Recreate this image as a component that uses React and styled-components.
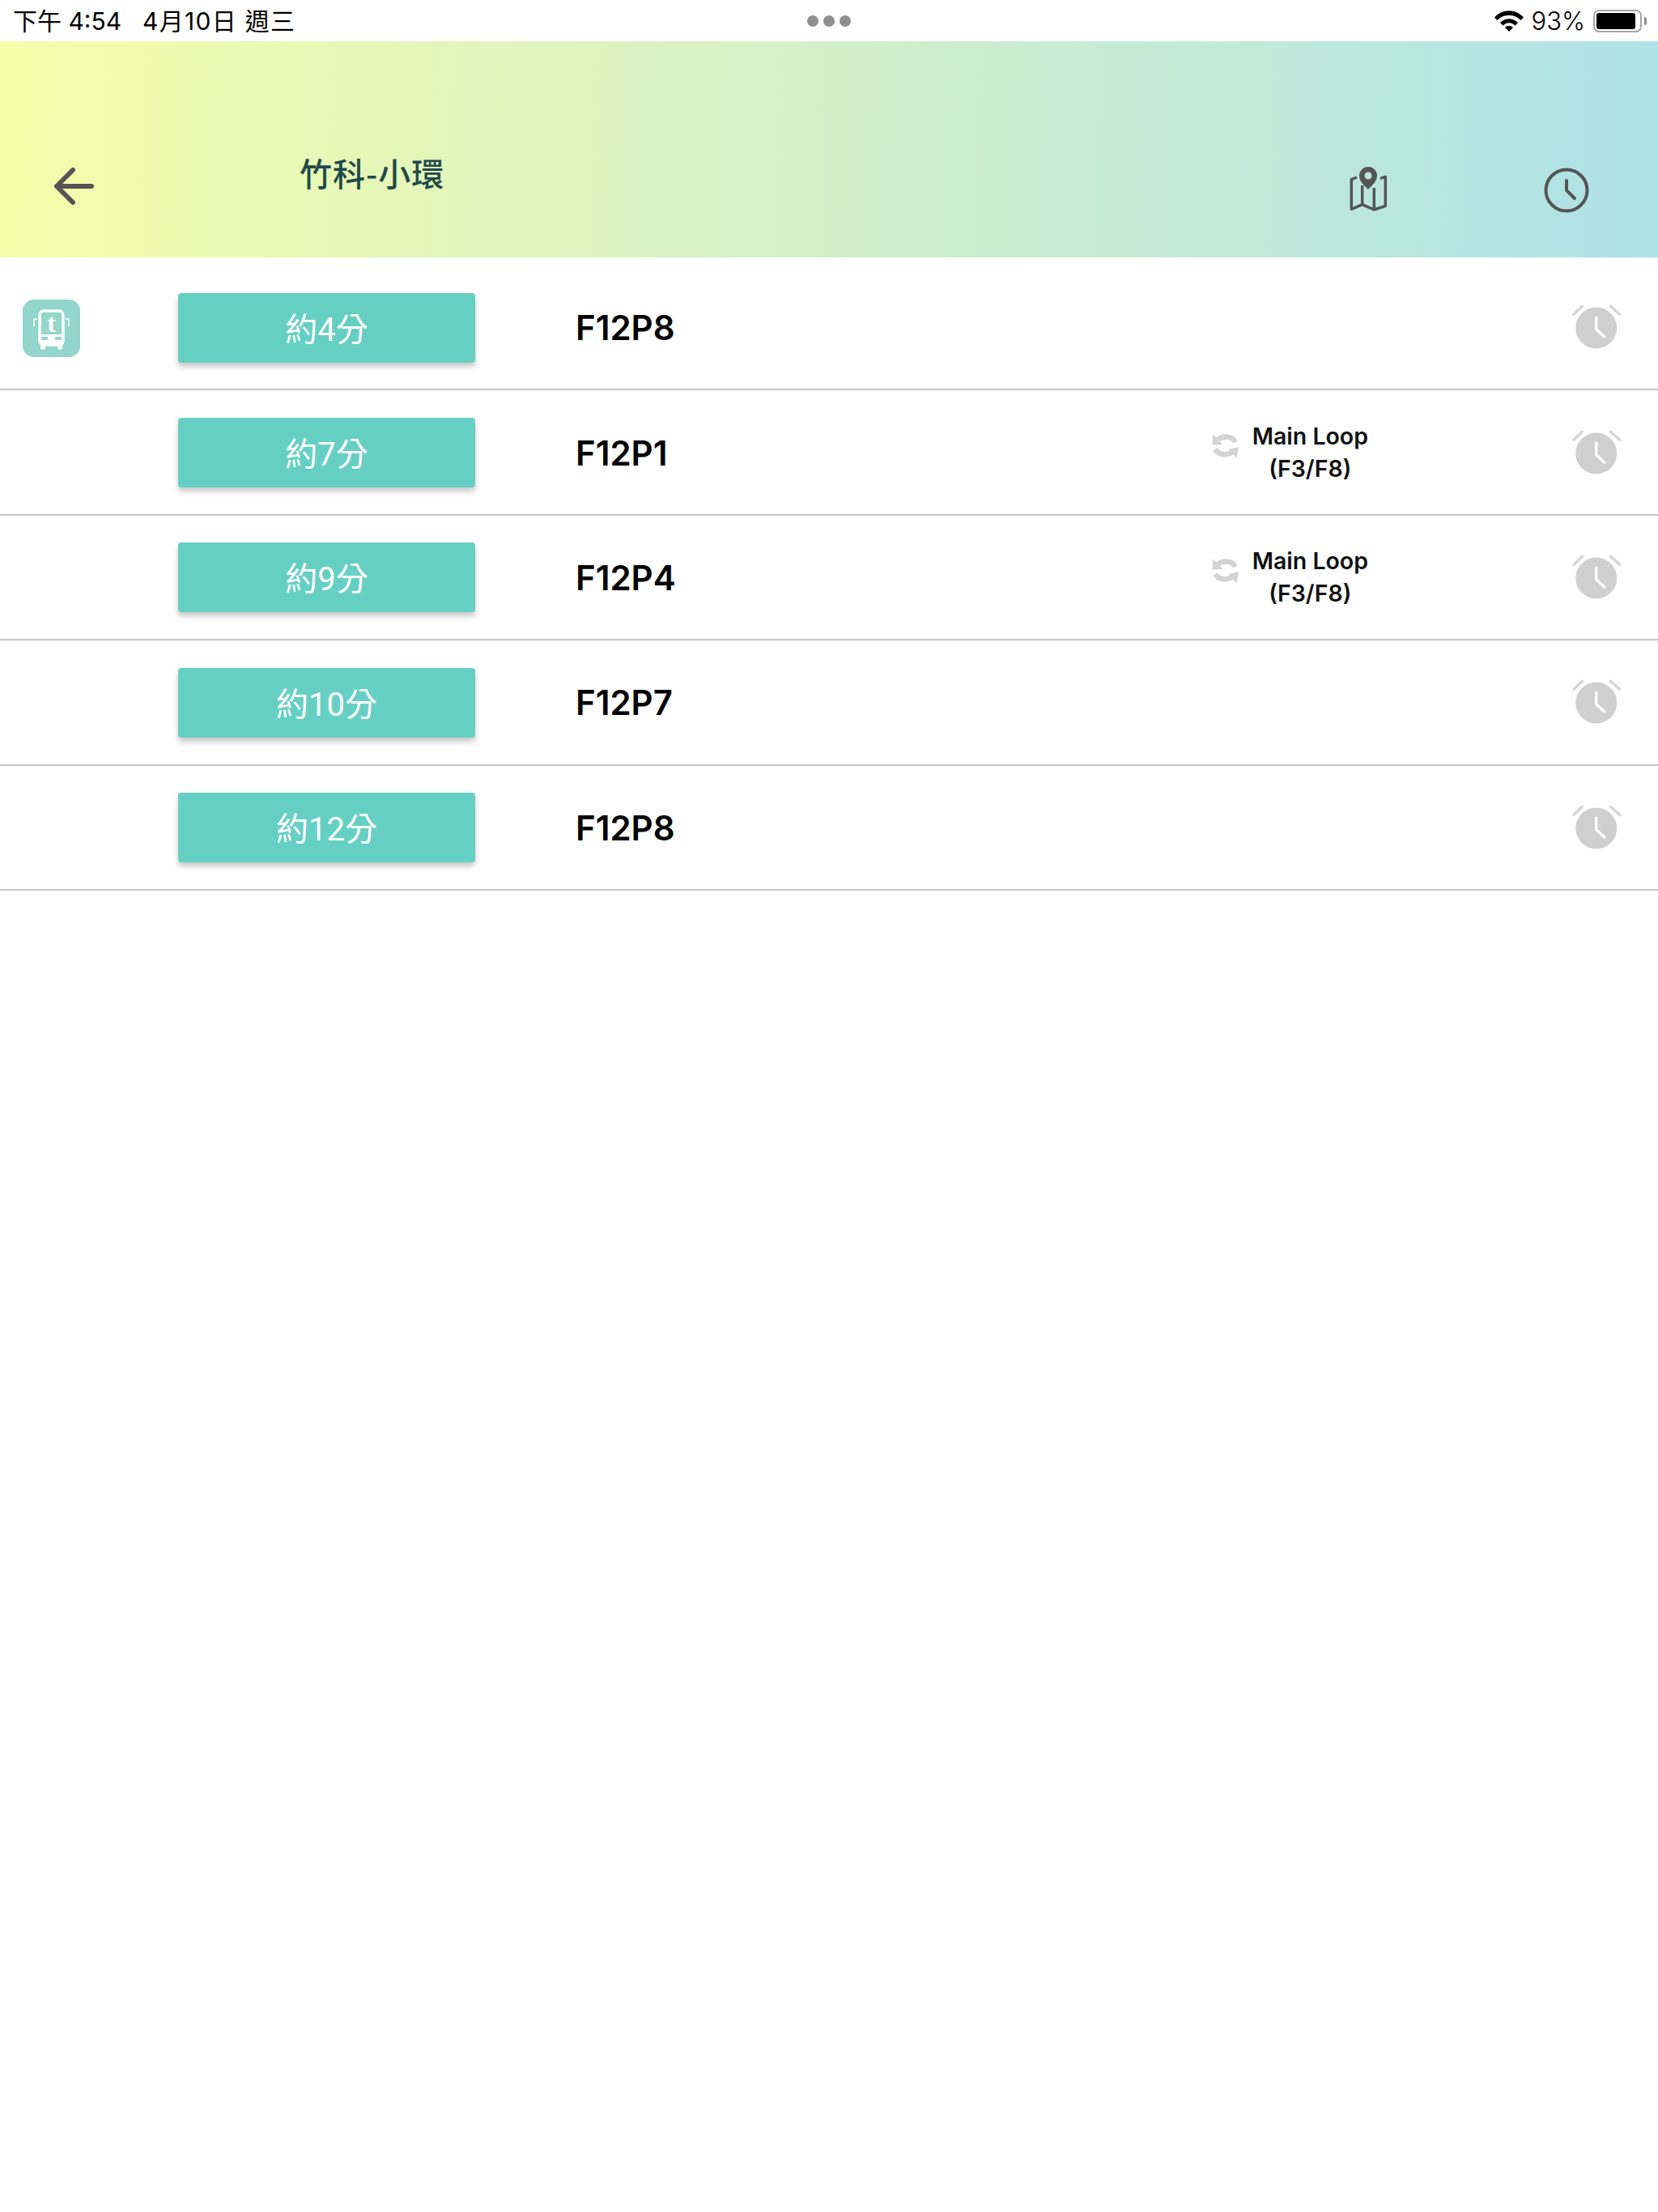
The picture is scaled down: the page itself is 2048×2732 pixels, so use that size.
import styled, { createGlobalStyle } from 'styled-components'

const GlobalStyle = createGlobalStyle`
  html, body {
    margin: 0;
    padding: 0;
    background: #fff;
  }
  body {
    font-family: Inter, 'Noto Sans CJK TC', sans-serif;
  }
`

const Page = styled.div`
  width: 2048px;
  min-height: 2732px;
  background: #fff;
`

const StatusBar = styled.div`
  display: grid;
  grid-template-columns: 1fr auto 1fr;
  align-items: center;
  height: 51px;
  padding: 0 16px 0 16px;
  box-sizing: border-box;
  color: #000;
  font-family: Inter, 'Noto Sans CJK TC', sans-serif;
  font-size: 30px;
`

const StatusLeft = styled.div`
  display: flex;
  gap: 26px;
  margin-bottom: 3px;
  white-space: pre;
`

const DateText = styled.span`
  letter-spacing: 1.3px;
`

const StatusDots = styled.div`
  display: flex;
  gap: 6px;
`

const Dot = styled.span`
  width: 14px;
  height: 14px;
  border-radius: 50%;
  background: #8e8e8e;
`

const StatusRight = styled.div`
  display: flex;
  align-items: center;
  justify-content: flex-end;
  gap: 10px;
  font-size: 31px;
  font-weight: 300;
`

const Battery = styled.div`
  position: relative;
  width: 60px;
  height: 28px;
  box-sizing: border-box;
  border: 2px solid #a6a6a6;
  border-radius: 7px;
  padding: 2px;
  margin-right: 4px;

  &::before {
    content: '';
    display: block;
    width: 48px;
    height: 20px;
    background: #000;
    border-radius: 3px;
  }

  &::after {
    content: '';
    position: absolute;
    right: -8px;
    top: 7px;
    width: 3px;
    height: 10px;
    background: #8a8a8a;
    border-radius: 0 3px 3px 0;
  }
`

const Header = styled.header`
  display: grid;
  grid-template-columns: 304px 1fr 240px 113px;
  align-items: center;
  height: 267px;
  padding: 91px 28px 0 66px;
  box-sizing: border-box;
  background: linear-gradient(92deg, #f6fdaa 0%, #aee2e8 100%);
`

const BackButton = styled.div`
  display: flex;
  align-items: center;
  height: 86px;
`

const Title = styled.h1`
  margin: 0 0 34px;
  color: #1f4a48;
  font-family: 'Noto Sans CJK TC', sans-serif;
  font-size: 40px;
  font-weight: 500;
  letter-spacing: 1px;
`

const HeaderIcon = styled.div`
  display: flex;
  align-items: center;
  height: 86px;
  padding-top: ${({ $drop }) => $drop}px;
`

const List = styled.main`
  padding-top: 10px;
`

const Row = styled.div`
  display: grid;
  grid-template-columns: 220px 367px 1fr 120px;
  align-items: center;
  height: 154.4px;
  padding-top: 1px;
  box-sizing: border-box;
  border-bottom: 2px solid #c6c6c6;
`

const BusCell = styled.div`
  display: flex;
  padding: 1px 0 0 28px;
`

const EtaButton = styled.div`
  display: flex;
  align-items: center;
  justify-content: center;
  height: 86px;
  padding-bottom: 2px;
  box-sizing: border-box;
  border-radius: 4px;
  background: #66cfc4;
  box-shadow: 0 5px 7px rgba(0, 0, 0, 0.22);
  color: #fff;
  font-family: Roboto, 'Noto Sans CJK TC', sans-serif;
  font-size: 40px;
  font-weight: 400;
`

const RouteCell = styled.div`
  display: flex;
  align-items: center;
  justify-content: space-between;
  padding-left: 124px;
`

const RouteName = styled.span`
  color: #000;
  font-size: 42px;
  font-weight: 600;
`

const Transfer = styled.div`
  display: flex;
  align-items: flex-start;
  gap: 17px;
  margin-right: 238px;
`

const SyncWrap = styled.div`
  display: flex;
  padding-top: 15px;
`

const TransferLabel = styled.div`
  color: #111;
  font-size: 28.5px;
  font-weight: 600;
  line-height: 40px;
  text-align: center;
`

const AlarmCell = styled.div`
  display: flex;
  justify-content: flex-start;
  padding: 1px 0 0 10px;
`

function ArrowIcon() {
  return (
    <svg width='50' height='48' viewBox='0 0 50 48' fill='none' stroke='#555' strokeWidth='6' strokeLinecap='round' strokeLinejoin='round'>
      <path d='M47 24H4M24 4L4 24l20 20' />
    </svg>
  )
}

function MapIcon() {
  return (
    <svg width='48' height='56' viewBox='27 14 48 56' fill='none'>
      <path d='M36 28l-6.700 2.700v36.600l13.400-5.600 14.600 6.300 14-4.700V27.300L65 29.300M42.700 38v23.700M57.300 41v27' stroke='#555' strokeWidth='3.500' strokeLinejoin='round' />
      <path fillRule='evenodd' d='M50 15a11 11 0 0 1 11 11c0 7-6 12-11 17-5-5-11-10-11-17a11 11 0 0 1 11-11zm0 6.500a4.500 4.500 0 1 0 0 9 4.500 4.500 0 0 0 0-9z' fill='#555' />
    </svg>
  )
}

function ClockIcon() {
  return (
    <svg width='56' height='56' viewBox='0 0 56 56' fill='none' stroke='#555' strokeWidth='4' strokeLinecap='round' strokeLinejoin='round'>
      <circle cx='28' cy='28' r='25.500' />
      <path d='M28 16v12l10 10' strokeWidth='4' />
    </svg>
  )
}

function BusIcon() {
  return (
    <svg width='71' height='71' viewBox='0 0 71 71'>
      <rect width='71' height='71' rx='14' fill='#93d6cb' />
      <path d='M14 33V24h4M57 33V24h-4' fill='none' stroke='#fff' strokeWidth='1.500' />
      <path d='M22 56h6v3a3 3 0 0 1-6 0zM43 56h6v3a3 3 0 0 1-6 0z' fill='#fff' />
      <rect x='21' y='14' width='29' height='42' rx='5' fill='none' stroke='#fff' strokeWidth='3.500' />
      <path d='M20 43h31v9a5 5 0 0 1-5 5H25a5 5 0 0 1-5-5z' fill='#fff' />
      <rect x='23' y='46' width='8' height='4' rx='1' fill='#93d6cb' />
      <rect x='40' y='46' width='8' height='4' rx='1' fill='#93d6cb' />
      <text x='35.500' y='40' textAnchor='middle' fill='#fff' fontFamily='Liberation Serif, serif' fontWeight='700' fontSize='32'>t</text>
    </svg>
  )
}

function SyncIcon() {
  return (
    <svg width='34' height='32' viewBox='14 13 34 32' fill='none'>
      <path d='M44 25c-4-8-15-8-22-3' stroke='#d3d3d3' strokeWidth='6.500' />
      <path d='M16 15l-.500 13.500 13-.500z' fill='#d3d3d3' />
      <path d='M19 34c5 8 16 8 23 2' stroke='#d3d3d3' strokeWidth='6.500' />
      <path d='M48 31l-2.500 14-10-11z' fill='#d3d3d3' />
    </svg>
  )
}

function AlarmIcon() {
  return (
    <svg width='72' height='68' viewBox='8 6 72 68' fill='none' strokeLinecap='round' strokeLinejoin='round'>
      <circle cx='41.700' cy='40' r='25.500' fill='#cfcfcf' />
      <path d='M14 23.300L24.300 13.300M59.300 13.300L70.700 23.300' stroke='#d6d6d6' strokeWidth='3.500' />
      <path d='M41.700 27.300v14.400l10 9.300' stroke='#fff' strokeWidth='3.500' />
    </svg>
  )
}

function WifiIcon() {
  return (
    <svg width='36' height='26' viewBox='0 0 36 26'>
      <path d='M0 8.500C10-2.500 26-2.500 36 8.500l-3.500 3.500C24.500 3.500 11.500 3.500 3.500 12z' fill='#000' />
      <path d='M7 15c6.500-6.500 15.500-6.500 22 0l-3.500 3.500c-4.500-4.500-10.500-4.500-15 0z' fill='#000' />
      <path d='M13 21c3-3 7-3 10 0l-5 5z' fill='#000' />
    </svg>
  )
}

const arrivals = [
  { eta: '約4分', route: 'F12P8', bus: true },
  { eta: '約7分', route: 'F12P1', loop: true },
  { eta: '約9分', route: 'F12P4', loop: true },
  { eta: '約10分', route: 'F12P7' },
  { eta: '約12分', route: 'F12P8' },
]

function App() {
  return (
    <Page>
      <GlobalStyle />
      <StatusBar>
        <StatusLeft>
          <span>下午 4:54</span>
          <DateText>4月10日 週三</DateText>
        </StatusLeft>
        <StatusDots>
          <Dot />
          <Dot />
          <Dot />
        </StatusDots>
        <StatusRight>
          <WifiIcon />
          <span>93%</span>
          <Battery />
        </StatusRight>
      </StatusBar>
      <Header>
        <BackButton>
          <ArrowIcon />
        </BackButton>
        <Title>竹科-小環</Title>
        <HeaderIcon $drop={6}>
          <MapIcon />
        </HeaderIcon>
        <HeaderIcon $drop={10}>
          <ClockIcon />
        </HeaderIcon>
      </Header>
      <List>
        {arrivals.map((item, i) => (
          <Row key={i}>
            <BusCell>{item.bus && <BusIcon />}</BusCell>
            <EtaButton>{item.eta}</EtaButton>
            <RouteCell>
              <RouteName>{item.route}</RouteName>
              {item.loop && (
                <Transfer>
                  <SyncWrap>
                    <SyncIcon />
                  </SyncWrap>
                  <TransferLabel>
                    Main Loop
                    <br />
                    (F3/F8)
                  </TransferLabel>
                </Transfer>
              )}
            </RouteCell>
            <AlarmCell>
              <AlarmIcon />
            </AlarmCell>
          </Row>
        ))}
      </List>
    </Page>
  )
}

export default App
